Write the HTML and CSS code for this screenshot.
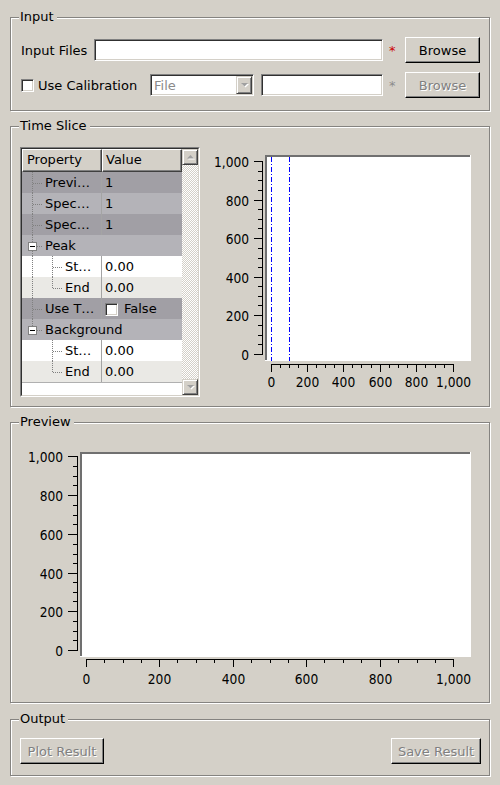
FILE: index.html
```html
<!DOCTYPE html>
<html>
<head>
<meta charset="utf-8">
<link rel="stylesheet" href="styles.css">
</head>
<body>
<div class="window">
  <section class="group g-input">
    <div class="group-title">Input</div>
    <div class="row">
      <span class="lbl-files">Input Files</span>
      <div class="field f-files"></div>
      <span class="req">*</span>
      <button class="btn b-browse">Browse</button>
    </div>
    <div class="row">
      <div class="chk-wrap"><span class="chk"></span><span>Use Calibration</span></div>
      <div class="combo"><span class="combo-text">File</span><span class="combo-btn"><svg width="9" height="6" viewBox="0 0 9 6"><polygon points="1,1 8,1 4.5,4.5" fill="#fff" transform="translate(1,1)"/><polygon points="1,1 8,1 4.5,4.5" fill="#a0a0a0"/></svg></span></div>
      <div class="field f-cal"></div>
      <span class="req dis">*</span>
      <button class="btn b-browse" disabled>Browse</button>
    </div>
  </section>

  <section class="group g-time">
    <div class="group-title">Time Slice</div>
    <div class="tree">
      <div class="tree-in">
        <div class="tree-body">
          <div class="hdr">
            <div class="hcell p">Property</div>
            <div class="hcell v">Value</div>
          </div>
          <div class="trow dark">
            <div class="pcell"><svg class="br" width="23" height="21"><path d="M10.5 0V21M11 11.5H21" /></svg><span>Previ…</span></div>
            <div class="vcell">1</div>
          </div>
          <div class="trow mid">
            <div class="pcell"><svg class="br" width="23" height="21"><path d="M10.5 0V21M11 11.5H21" /></svg><span>Spec…</span></div>
            <div class="vcell">1</div>
          </div>
          <div class="trow dark">
            <div class="pcell"><svg class="br" width="23" height="21"><path d="M10.5 0V21M11 11.5H21" /></svg><span>Spec…</span></div>
            <div class="vcell">1</div>
          </div>
          <div class="trow mid">
            <div class="pcell span"><svg class="br" width="23" height="21"><path d="M10.5 0V7M10.5 16V21M15 11.5H21" /><rect class="box" x="6.5" y="7.5" width="8" height="8"/><path class="minus" d="M8 11.5H13"/></svg><span>Peak</span></div>
          </div>
          <div class="trow white">
            <div class="pcell"><svg class="br" width="43" height="21"><path d="M10.5 0V21M30.5 0V21M31 11.5H41" /></svg><span>St…</span></div>
            <div class="vcell">0.00</div>
          </div>
          <div class="trow light">
            <div class="pcell"><svg class="br" width="43" height="21"><path d="M10.5 0V21M30.5 0V11M31 11.5H41" /></svg><span>End</span></div>
            <div class="vcell">0.00</div>
          </div>
          <div class="trow dark">
            <div class="pcell"><svg class="br" width="23" height="21"><path d="M10.5 0V21M11 11.5H21" /></svg><span>Use T…</span></div>
            <div class="vcell"><span class="chk vchk"></span><span>False</span></div>
          </div>
          <div class="trow mid">
            <div class="pcell span"><svg class="br" width="23" height="21"><path d="M10.5 0V7M15 11.5H21" /><rect class="box" x="6.5" y="7.5" width="8" height="8"/><path class="minus" d="M8 11.5H13"/></svg><span>Background</span></div>
          </div>
          <div class="trow white">
            <div class="pcell"><svg class="br" width="43" height="21"><path d="M30.5 0V21M31 11.5H41" /></svg><span>St…</span></div>
            <div class="vcell">0.00</div>
          </div>
          <div class="trow light">
            <div class="pcell"><svg class="br" width="43" height="21"><path d="M30.5 0V11M31 11.5H41" /></svg><span>End</span></div>
            <div class="vcell">0.00</div>
          </div>
          <div class="trest"></div>
        </div>
        <div class="scroll">
          <div class="sb-btn"><svg width="9" height="6" viewBox="0 0 9 6"><polygon points="1,4.5 8,4.5 4.5,1" fill="#fff" transform="translate(1,1)"/><polygon points="1,4.5 8,4.5 4.5,1" fill="#a0a0a0"/></svg></div>
          <div class="sb-track"></div>
          <div class="sb-btn"><svg width="9" height="6" viewBox="0 0 9 6"><polygon points="1,1 8,1 4.5,4.5" fill="#fff" transform="translate(1,1)"/><polygon points="1,1 8,1 4.5,4.5" fill="#a0a0a0"/></svg></div>
        </div>
      </div>
    </div>
    <svg class="plot-top" width="280" height="250" viewBox="0 0 280 250">
      <rect x="65" y="8" width="206" height="206" fill="#fff"/>
      <rect x="65" y="8" width="205" height="2" fill="#707070"/>
      <rect x="65" y="8" width="2" height="205" fill="#707070"/>
      <path d="M71.5 10V214M89.5 10V214" stroke="#0000ff" stroke-width="1" stroke-dasharray="5 2 1 2" fill="none"/>
      <g stroke="#000" stroke-width="1" fill="none" shape-rendering="crispEdges">
        <path d="M62.5 14V208"/>
        <path d="M54 14.5H63M54 53.5H63M54 91.5H63M54 130.5H63M54 168.5H63M54 207.5H63"/>
        <path d="M58 24.5H63M58 33.5H63M58 43.5H63M58 62.5H63M58 72.5H63M58 81.5H63M58 101.5H63M58 111.5H63M58 120.5H63M58 139.5H63M58 149.5H63M58 158.5H63M58 178.5H63M58 188.5H63M58 197.5H63"/>
        <path d="M71 217.5H254"/>
        <path d="M71.5 217V225M107.5 217V225M143.5 217V225M180.5 217V225M216.5 217V225M253.5 217V225"/>
        <path d="M80.5 217V221M89.5 217V221M98.5 217V221M116.5 217V221M125.5 217V221M134.5 217V221M152.5 217V221M161.5 217V221M171.5 217V221M189.5 217V221M198.5 217V221M207.5 217V221M225.5 217V221M235.5 217V221M244.5 217V221"/>
      </g>
      <g class="ax" text-anchor="end">
        <text x="49" y="19.7">1,000</text>
        <text x="49" y="58.7">800</text>
        <text x="49" y="96.7">600</text>
        <text x="49" y="135.7">400</text>
        <text x="49" y="173.7">200</text>
        <text x="49" y="212.7">0</text>
      </g>
      <g class="ax" text-anchor="middle">
        <text x="71.5" y="240">0</text>
        <text x="107.5" y="240">200</text>
        <text x="143.5" y="240">400</text>
        <text x="180.5" y="240">600</text>
        <text x="216.5" y="240">800</text>
        <text x="253.5" y="240">1,000</text>
      </g>
    </svg>
  </section>

  <section class="group g-preview">
    <div class="group-title">Preview</div>
    <svg class="plot-prev" width="478" height="279" viewBox="0 0 478 279">
      <rect x="69" y="29" width="391" height="205" fill="#fff"/>
      <rect x="69" y="29" width="390" height="2" fill="#707070"/>
      <rect x="69" y="29" width="2" height="204" fill="#707070"/>
      <g stroke="#000" stroke-width="1" fill="none" shape-rendering="crispEdges">
        <path d="M66.5 33V228"/>
        <path d="M57 33.5H67M57 72.5H67M57 111.5H67M57 150.5H67M57 188.5H67M57 227.5H67"/>
        <path d="M62 43.5H67M62 53.5H67M62 62.5H67M62 82.5H67M62 92.5H67M62 101.5H67M62 121.5H67M62 131.5H67M62 140.5H67M62 159.5H67M62 169.5H67M62 178.5H67M62 198.5H67M62 208.5H67M62 217.5H67"/>
        <path d="M75 236.5H443"/>
        <path d="M75.5 236V244M148.5 236V244M222.5 236V244M295.5 236V244M369.5 236V244M442.5 236V244"/>
        <path d="M93.5 236V240M112.5 236V240M130.5 236V240M166.5 236V240M185.5 236V240M203.5 236V240M240.5 236V240M259.5 236V240M277.5 236V240M313.5 236V240M332.5 236V240M350.5 236V240M387.5 236V240M406.5 236V240M424.5 236V240"/>
      </g>
      <g class="ax" text-anchor="end">
        <text x="52" y="38.7">1,000</text>
        <text x="52" y="77.7">800</text>
        <text x="52" y="116.7">600</text>
        <text x="52" y="155.7">400</text>
        <text x="52" y="193.7">200</text>
        <text x="52" y="232.7">0</text>
      </g>
      <g class="ax" text-anchor="middle">
        <text x="75.5" y="260.5">0</text>
        <text x="148.5" y="260.5">200</text>
        <text x="222.5" y="260.5">400</text>
        <text x="295.5" y="260.5">600</text>
        <text x="369.5" y="260.5">800</text>
        <text x="442.5" y="260.5">1,000</text>
      </g>
    </svg>
  </section>

  <section class="group g-out">
    <div class="group-title">Output</div>
    <button class="btn b-plot" disabled>Plot Result</button>
    <button class="btn b-save" disabled>Save Result</button>
  </section>
</div>
</body>
</html>
```

FILE: styles.css
```css
* { box-sizing: border-box; }
html, body { margin: 0; padding: 0; }
body {
  width: 500px;
  height: 785px;
  overflow: hidden;
  background: #d4d0c8;
  font-family: "DejaVu Sans", "Noto Sans", sans-serif;
  font-size: 13px;
  color: #000;
}
.window { padding: 17px 10px 0 10px; }

.group {
  position: relative;
  border: 1px solid #858380;
  box-shadow: 1px 1px 0 #fff, inset 1px 1px 0 #fff;
}
.group + .group { margin-top: 15px; }
.group.g-out { margin-top: 16px; }
.group-title {
  position: absolute;
  top: -9px;
  left: 8px;
  padding: 0 3px 0 1px;
  background: #d4d0c8;
  line-height: 16px;
  white-space: nowrap;
}

/* Input */
.g-input { padding: 19px 8px 12px 10px; }
.row { display: flex; align-items: center; height: 26px; }
.row + .row { margin-top: 9px; }
.lbl-files { width: 73px; flex: none; }
.field {
  flex: none;
  height: 22px;
  background: #fff;
  border: 1px solid;
  border-color: #808080 #fff #fff #808080;
  box-shadow: inset 1px 1px 0 #303030, inset -1px -1px 0 #d4d0c8;
}
.f-files { width: 289px; }
.f-cal { width: 122px; }
.req { width: 22px; flex: none; padding-left: 6px; color: #cc0000; }
.req.dis { color: #8c8c8c; }

.btn {
  flex: none;
  height: 26px;
  padding: 0;
  font: inherit;
  color: #000;
  background: #d4d0c8;
  border: 1px solid;
  border-color: #fff #000 #000 #fff;
  box-shadow: inset -1px -1px 0 #808080;
  border-radius: 0;
}
.btn:disabled { color: #808080; text-shadow: 1px 1px 0 #fff; }
.b-browse { width: 75px; }
.b-plot { width: 84px; }
.b-save { width: 90px; }

.chk-wrap { width: 129px; flex: none; display: flex; align-items: center; gap: 4px; }
.chk {
  display: block;
  flex: none;
  width: 13px;
  height: 13px;
  background: #fff;
  border: 1px solid;
  border-color: #808080 #fff #fff #808080;
  box-shadow: inset 1px 1px 0 #303030, inset -1px -1px 0 #d4d0c8;
}
.combo {
  flex: none;
  width: 104px;
  height: 22px;
  margin-right: 7px;
  padding: 2px 1px 1px 2px;
  display: flex;
  align-items: stretch;
  background: #fff;
  border: 1px solid;
  border-color: #808080 #fff #fff #808080;
  box-shadow: inset 1px 1px 0 #303030, inset -1px -1px 0 #d4d0c8;
}
.combo-text { flex: 1; padding-left: 1px; color: #8a8a8a; line-height: 18px; }
.combo-btn {
  width: 16px;
  flex: none;
  margin: -1px 0 0 0;
  display: flex;
  align-items: center;
  justify-content: center;
  background: #d4d0c8;
  border: 1px solid;
  border-color: #d4d0c8 #404040 #404040 #d4d0c8;
  box-shadow: inset 1px 1px 0 #fff, inset -1px -1px 0 #808080;
}
.combo-btn svg, .sb-btn svg { display: block; }

/* Time slice */
.g-time { padding: 20px 8px 9px 9px; display: flex; }
.tree {
  flex: none;
  width: 180px;
  height: 250px;
  border: 1px solid;
  border-color: #808080 #fff #fff #808080;
}
.tree-in {
  height: 100%;
  display: flex;
  background: #fff;
  border: 1px solid;
  border-color: #303030 #d4d0c8 #d4d0c8 #303030;
}
.tree-body { width: 160px; flex: none; display: flex; flex-direction: column; }
.hdr { display: flex; height: 23px; flex: none; }
.hcell {
  width: 80px;
  height: 23px;
  background: #d4d0c8;
  border: 1px solid;
  border-color: #fff #404040 #404040 #fff;
  box-shadow: inset -1px -1px 0 #808080;
  padding-left: 4px;
  line-height: 20px;
  white-space: nowrap;
}
.hcell.v { padding-left: 3px; }
.trow { display: flex; height: 21px; flex: none; line-height: 21px; white-space: nowrap; }
.pcell {
  width: 80px;
  flex: none;
  display: flex;
  overflow: hidden;
  border-right: 1px solid #a4a4a4;
}
.pcell.span { width: 160px; border-right: 0; }
.vcell { width: 80px; flex: none; padding-left: 3px; display: flex; align-items: center; }
.vchk { margin-right: 6px; margin-top: 1px; }
.br { display: block; flex: none; }
.br path { stroke: #808080; stroke-width: 1; stroke-dasharray: 1 1; fill: none; shape-rendering: crispEdges; }
.br rect.box { stroke: #808080; fill: #fff; shape-rendering: crispEdges; }
.br path.minus { stroke: #000; stroke-dasharray: none; }
.dark { background: #a19fa5; }
.mid { background: #b4b3b8; }
.white { background: #fff; }
.light { background: #eae9e5; }
.trest { flex: 1; border-top: 1px solid #b0b0b0; }

.scroll { width: 16px; flex: none; display: flex; flex-direction: column; }
.sb-btn {
  height: 16px;
  flex: none;
  display: flex;
  align-items: center;
  justify-content: center;
  background: #d4d0c8;
  border: 1px solid;
  border-color: #d4d0c8 #404040 #404040 #d4d0c8;
  box-shadow: inset 1px 1px 0 #fff, inset -1px -1px 0 #808080;
}
.sb-track {
  flex: 1;
  background-image: repeating-conic-gradient(#fff 0 25%, #d4d0c8 0 50%);
  background-size: 2px 2px;
}

.plot-top, .plot-prev { display: block; flex: none; }
.ax {
  font-family: "DejaVu Sans Condensed", "DejaVu Sans", sans-serif;
  font-stretch: condensed;
  font-size: 13.6px;
  fill: #000;
}

/* Output */
.g-out { padding: 18px 8px 11px 9px; display: flex; justify-content: space-between; }
```
